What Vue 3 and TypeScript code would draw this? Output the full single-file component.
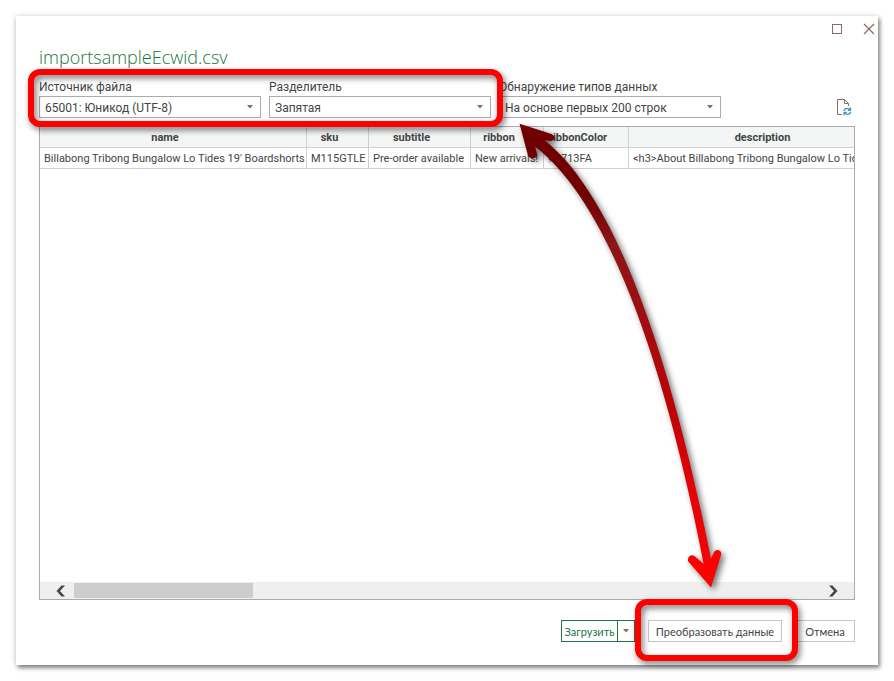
<script setup lang="ts">
import { ref } from 'vue'

interface Column {
  key: string
  width: number
}

const fileName = 'importsampleEcwid.csv'
const origin = ref('65001: Юникод (UTF-8)')
const delimiter = ref('Запятая')
const detection = ref('На основе первых 200 строк')

const columns: Column[] = [
  { key: 'name', width: 267 },
  { key: 'sku', width: 62 },
  { key: 'subtitle', width: 102 },
  { key: 'ribbon', width: 73 },
  { key: 'ribbonColor', width: 85 },
  { key: 'description', width: 284 },
]

const rows: Record<string, string>[] = [
  {
    name: "Billabong Tribong Bungalow Lo Tides 19' Boardshorts",
    sku: 'M115GTLE',
    subtitle: 'Pre-order available',
    ribbon: 'New arrivals!',
    ribbonColor: '#4713FA',
    description: '<h3>About Billabong Tribong Bungalow Lo Tides',
  },
]
</script>

<template>
  <main class="dialog">
    <div class="titlebar">
      <button type="button" class="win-btn" aria-label="Развернуть">
        <svg width="12" height="12" viewBox="0 0 12 12"><rect x="1.5" y="1.5" width="9" height="9" fill="none" stroke="#8a6a64" /></svg>
      </button>
      <button type="button" class="win-btn" aria-label="Закрыть">
        <svg width="12" height="12" viewBox="0 0 12 12"><path d="M1 1L11 11M11 1L1 11" fill="none" stroke="#8a6a64" stroke-width="1.2" /></svg>
      </button>
    </div>

    <h1 class="title">{{ fileName }}</h1>

    <div class="options">
      <div class="marked marked-options">
        <div class="field">
          <label for="origin">Источник файла</label>
          <div class="select">
            <select id="origin" v-model="origin"><option>65001: Юникод (UTF-8)</option></select>
            <svg class="caret" width="6" height="4" viewBox="0 0 6 4"><path d="M0 0H6L3 3.5Z" fill="#8a6a64" /></svg>
          </div>
        </div>
        <div class="field">
          <label for="delimiter">Разделитель</label>
          <div class="select">
            <select id="delimiter" v-model="delimiter"><option>Запятая</option></select>
            <svg class="caret" width="6" height="4" viewBox="0 0 6 4"><path d="M0 0H6L3 3.5Z" fill="#8a6a64" /></svg>
          </div>
        </div>
      </div>
      <div class="field">
        <label for="detection">Обнаружение типов данных</label>
        <div class="select">
          <select id="detection" v-model="detection"><option>На основе первых 200 строк</option></select>
          <svg class="caret" width="6" height="4" viewBox="0 0 6 4"><path d="M0 0H6L3 3.5Z" fill="#8a6a64" /></svg>
        </div>
      </div>
      <button type="button" class="refresh" aria-label="Обновить">
        <svg width="16" height="18" viewBox="0 0 16 18" fill="none">
          <path d="M6 16.5H1.500V1.500H8.500L12.500 5.500V8" stroke="#8a6a64" />
          <path d="M8.500 1.500V5.500H12.500" stroke="#8a6a64" />
          <path d="M8 12.800C8.300 11 9.800 10.300 11.200 10.300C12.300 10.300 13.200 10.800 13.800 11.500M14.500 9.500V12.300H11.800" stroke="#3f8fc9" stroke-width="1.300" />
          <path d="M14.600 13.800C14.300 15.600 12.800 16.300 11.400 16.300C10.300 16.300 9.400 15.800 8.800 15.100M8.100 17.200V14.400H10.800" stroke="#3f8fc9" stroke-width="1.300" />
        </svg>
      </button>
    </div>

    <section class="preview">
      <div class="grid">
        <table>
          <colgroup>
            <col v-for="c in columns" :key="c.key" :style="{ width: c.width + 'px' }" />
          </colgroup>
          <thead>
            <tr><th v-for="c in columns" :key="c.key" scope="col">{{ c.key }}</th></tr>
          </thead>
          <tbody>
            <tr v-for="row in rows" :key="row.sku">
              <td v-for="c in columns" :key="c.key">{{ row[c.key] }}</td>
            </tr>
          </tbody>
        </table>
      </div>
      <div class="scrollbar">
        <button type="button" class="scroll-btn" aria-label="Прокрутить влево">
          <svg width="10" height="12" viewBox="0 0 10 12"><path d="M5.500 .5H9L4 6L9 11.500H5.500L.5 6Z" fill="#51403f" /></svg>
        </button>
        <div class="track"><div class="thumb"></div></div>
        <button type="button" class="scroll-btn" aria-label="Прокрутить вправо">
          <svg width="10" height="12" viewBox="0 0 10 12"><path d="M4.500 .5H1L6 6L1 11.500H4.500L9.500 6Z" fill="#51403f" /></svg>
        </button>
      </div>
    </section>

    <footer class="actions">
      <div class="split">
        <button type="button" class="load">Загрузить</button>
        <button type="button" class="load-more" aria-label="Другие варианты загрузки">
          <svg width="6" height="4" viewBox="0 0 6 4"><path d="M0 0H6L3 3.500Z" fill="#8a6a64" /></svg>
        </button>
      </div>
      <div class="marked marked-transform">
        <button type="button" class="btn transform">Преобразовать данные</button>
      </div>
      <button type="button" class="btn cancel">Отмена</button>
    </footer>

    <svg class="arrow" width="240" height="490" viewBox="500 110 240 490" aria-hidden="true">
      <defs>
        <linearGradient id="shaft" gradientUnits="userSpaceOnUse" x1="0" y1="124" x2="0" y2="587">
          <stop offset="0" stop-color="#700000" />
          <stop offset=".16" stop-color="#720202" />
          <stop offset=".26" stop-color="#8e1416" />
          <stop offset=".36" stop-color="#981113" />
          <stop offset=".48" stop-color="#aa0a0c" />
          <stop offset=".62" stop-color="#be0204" />
          <stop offset=".78" stop-color="#e20406" />
          <stop offset=".92" stop-color="#f00406" />
          <stop offset="1" stop-color="#ff0000" />
        </linearGradient>
      </defs>
      <path d="M533 132C609 179 669 344 713 569L705 571C662 347 602 189 527 141Z" fill="url(#shaft)" />
      <path d="M519.500 123.800L551.500 134C556 136.500 554.500 141.200 550 141L542 140L535 146L537.200 154.500C537.200 158.800 530.500 159.800 528 155.500Z" fill="#700000" />
      <path d="M711 587.500L688.300 561.500C686.500 557.500 691 553.300 694.500 556L707 567L713.800 552.500C715.500 548.300 722.200 549.500 721.200 554.500Z" fill="#ff0000" />
    </svg>
  </main>
</template>

<style>
body {
  margin: 0;
  background: #fff;
}
</style>

<style scoped>
.dialog {
  position: relative;
  display: flex;
  flex-direction: column;
  box-sizing: border-box;
  min-height: calc(100vh - 32px);
  margin: 16px;
  padding: 0 23px 23px;
  background: #fff;
  box-shadow: 2px 3px 4px rgba(0, 0, 0, 0.4), 0 1px 6px rgba(0, 0, 0, 0.22);
  font-family: Roboto, 'Noto Sans', sans-serif;
  font-size: 11px;
  color: #444;
}

button,
select {
  box-sizing: border-box;
  margin: 0;
  padding: 0;
  border: 0;
  background: none;
  font: inherit;
  color: inherit;
}

svg {
  display: block;
}

.titlebar {
  display: flex;
  justify-content: flex-end;
  align-items: flex-start;
  gap: 20px;
  height: 26px;
  padding-top: 7px;
  box-sizing: border-box;
  margin-right: -20px;
}

.title {
  margin: 0;
  font-family: 'Open Sans', sans-serif;
  font-size: 18px;
  font-weight: 300;
  line-height: 30px;
  color: #217346;
}

.options,
.marked-options {
  display: flex;
  gap: 8px;
}

.options {
  align-items: flex-end;
  padding-top: 6px;
}

.marked {
  position: relative;
}

.marked::after {
  content: '';
  position: absolute;
  border: 6px solid #f00;
  border-radius: 12px;
  pointer-events: none;
  filter: drop-shadow(2px 3px 3px rgba(0, 0, 0, 0.55));
  z-index: 2;
}

.marked-options::after {
  inset: -9px -12px -9px -11px;
}

.marked-transform::after {
  inset: -21px -16px -19px -13px;
}

.field {
  width: 222px;
  font-size: 12px;
}

.field label {
  display: block;
  line-height: 18px;
}

.select {
  position: relative;
}

.select select {
  display: block;
  width: 100%;
  height: 22px;
  padding: 2px 20px 0 5px;
  border: 1px solid #ababab;
  border-radius: 0;
  appearance: none;
  background: #fff;
}

.caret {
  position: absolute;
  top: 9px;
  right: 8px;
  pointer-events: none;
}

.refresh {
  margin-left: auto;
  margin-right: 3px;
  margin-bottom: 2px;
}

.preview {
  display: flex;
  flex: 1;
  flex-direction: column;
  margin-top: 8px;
  border: 1px solid #ababab;
}

.grid {
  flex: 1;
  overflow: hidden;
  display: grid;
  align-items: start;
}

table {
  width: 873px;
  table-layout: fixed;
  border-collapse: separate;
  border-spacing: 0;
}

th,
td {
  box-sizing: border-box;
  height: 21px;
  padding: 2px 3px 0 4px;
  border-right: 1px solid #d0d0d0;
  border-bottom: 1px solid #d0d0d0;
  line-height: 18px;
  white-space: nowrap;
}

th {
  padding: 2px 16px 0 0;
  background: #f4f6f6;
  text-align: center;
}

.scrollbar {
  display: flex;
  align-items: center;
  gap: 8px;
  height: 17px;
  padding: 0 16px;
  background: #efefef;
}

.track {
  flex: 1;
}

.thumb {
  width: 24%;
  height: 15px;
  background: #cdcdcd;
}

.actions {
  display: flex;
  justify-content: flex-end;
  gap: 13px;
  margin-top: 20px;
  font-family: Lato, 'Open Sans', sans-serif;
}

.split {
  display: flex;
  border: 1px solid #217346;
}

.load {
  width: 56px;
  height: 20px;
  border-right: 1px solid #217346;
  color: #217346;
}

.load-more {
  display: flex;
  align-items: center;
  justify-content: center;
  width: 16px;
}

.btn {
  height: 22px;
  border: 1px solid #c6c6c6;
  background: #fff;
}

.transform {
  width: 134px;
}

.cancel {
  width: 60px;
}

.arrow {
  position: absolute;
  top: 94px;
  left: 484px;
  pointer-events: none;
  filter: drop-shadow(3px 3px 3px rgba(0, 0, 0, 0.55));
  z-index: 1;
}
</style>
